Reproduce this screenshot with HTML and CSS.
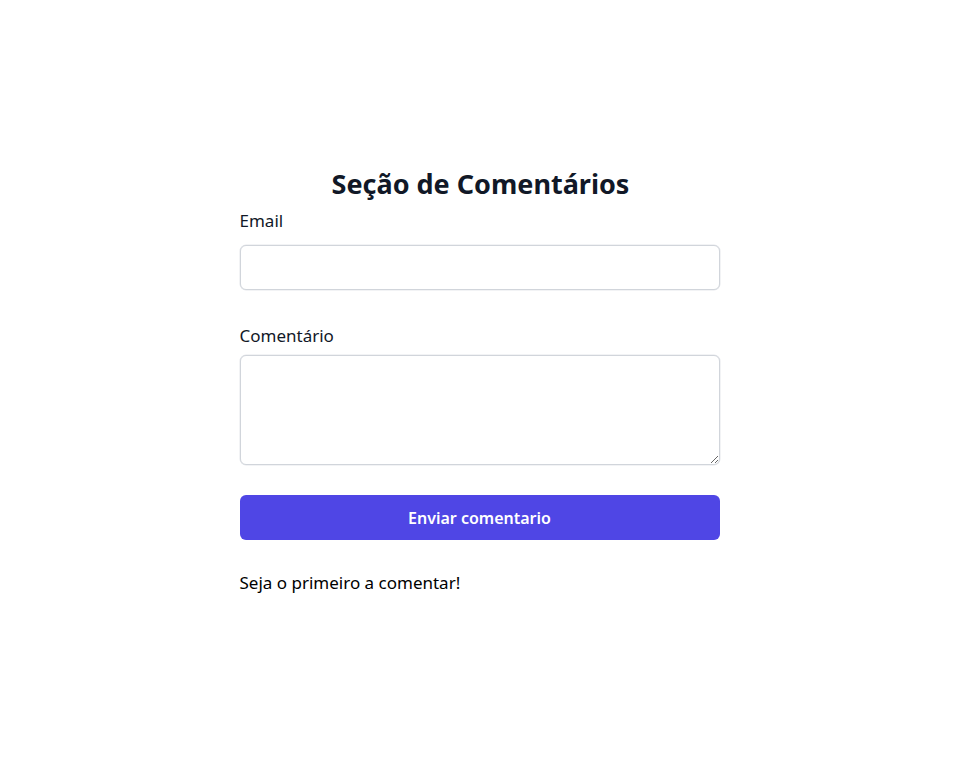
FILE: index.html
```html
<!DOCTYPE html>
<html lang="pt">
<head>
<meta charset="utf-8">
<title>Seção de Comentários</title>
<link rel="stylesheet" href="styles.css">
</head>
<body>
<main class="page">
  <section class="comments">
    <h1 class="title">Seção de Comentários</h1>
    <form class="form">
      <label class="label label-email" for="email">Email</label>
      <input class="field field-input" id="email" type="email">
      <label class="label label-comment" for="comment">Comentário</label>
      <textarea class="field field-textarea" id="comment"></textarea>
      <button class="submit" type="button">Enviar comentario</button>
    </form>
    <p class="empty">Seja o primeiro a comentar!</p>
  </section>
</main>
</body>
</html>
```
FILE: styles.css
```css
* { box-sizing: border-box; }
html, body { margin: 0; padding: 0; background: #ffffff; }
body {
  font-family: "Noto Sans", "Open Sans", sans-serif;
  color: #111827;
}
.page {
  display: flex;
  justify-content: center;
  padding-top: 168px;
}
.comments {
  width: 480px;
  margin-left: 1px;
}
.title {
  margin: 0;
  padding-left: 2px;
  font-size: 27px;
  line-height: 32px;
  font-weight: 700;
  text-align: center;
  color: #111827;
}
.form {
  display: flex;
  flex-direction: column;
}
.label {
  display: block;
  font-size: 17px;
  line-height: 24px;
  color: #111827;
}
.label-email { margin-top: 9px; }
.label-comment { margin-top: 34px; }
.field {
  display: block;
  width: 100%;
  border: 1px solid #d1d5db;
  border-radius: 6px;
  background: #fff;
  box-shadow: 0 0 0 0.5px #e5e7eb;
  font: inherit;
  padding: 8px 12px;
  outline: none;
}
.field-input { height: 45px; margin-top: 12px; }
.field-textarea { height: 110px; margin-top: 7px; resize: vertical; }
.submit {
  margin-top: 30px;
  height: 45px;
  border: 0;
  border-radius: 6px;
  background: #4f46e5;
  color: #fff;
  font: inherit;
  font-size: 16px;
  font-weight: 600;
  cursor: pointer;
}
.empty {
  margin: 31px 0 0;
  font-size: 17px;
  line-height: 24px;
  color: #000;
}
```
